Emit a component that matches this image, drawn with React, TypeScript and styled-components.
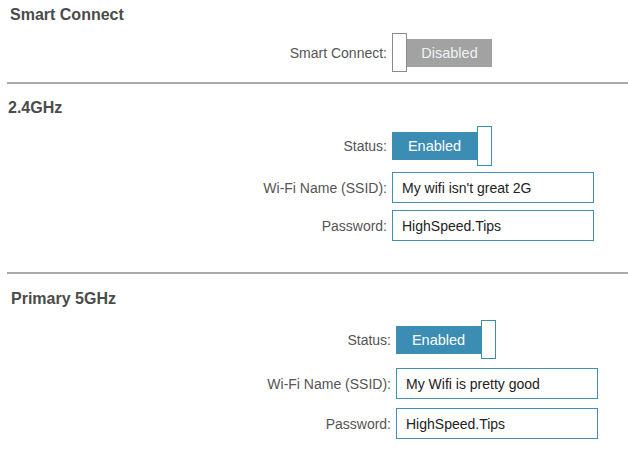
import React from "react";
import styled, { createGlobalStyle } from "styled-components";

const GlobalStyle = createGlobalStyle`
  html, body {
    margin: 0;
    padding: 0;
    background: #ffffff;
  }
  body {
    font-family: "Liberation Sans", Arial, sans-serif;
    color: #555555;
  }
`;

const Page = styled.div`
  width: 628px;
  height: 456px;
  overflow: hidden;
  display: flex;
  flex-direction: column;
`;

const Heading = styled.h2<{ $indent: number; $top: number }>`
  margin: ${(p) => p.$top}px 0 0 0;
  padding-left: ${(p) => p.$indent}px;
  font-size: 16px;
  line-height: 18px;
  font-weight: bold;
  color: #4b4b4b;
`;

const Fields = styled.div<{ $labelWidth: number; $top: number; $gaps: string }>`
  display: grid;
  grid-template-columns: ${(p) => p.$labelWidth}px auto;
  grid-template-rows: ${(p) => p.$gaps};
  column-gap: 5px;
  margin-top: ${(p) => p.$top}px;
  align-items: center;
`;

const Label = styled.div`
  text-align: right;
  font-size: 14px;
  color: #555555;
`;

const ToggleWrap = styled.div`
  display: flex;
  align-items: center;
  height: 100%;
`;

const Bar = styled.div<{ $on: boolean }>`
  width: 85px;
  height: 28px;
  display: flex;
  align-items: center;
  justify-content: center;
  background: ${(p) => (p.$on ? "#3c8db4" : "#a2a2a2")};
  color: ${(p) => (p.$on ? "#ffffff" : "#eef2f5")};
  font-size: 14.5px;
`;

const Knob = styled.div<{ $on: boolean }>`
  box-sizing: border-box;
  width: 15px;
  height: 100%;
  background: #ffffff;
  border: 1px solid ${(p) => (p.$on ? "#3c8db4" : "#8c8c8c")};
`;

const TextInput = styled.input`
  box-sizing: border-box;
  width: 202px;
  height: 31px;
  margin: 0;
  padding: 0 0 0 9px;
  border: 1.5px solid #3f8fb6;
  border-radius: 0;
  outline: none;
  font-family: "Liberation Sans", Arial, sans-serif;
  font-size: 14px;
  color: #222222;
  background: #ffffff;
`;

const Divider = styled.hr<{ $top: number }>`
  box-sizing: border-box;
  margin: ${(p) => p.$top}px 0 0 7px;
  height: 2px;
  border: none;
  background: #a9a9a9;
`;

function Toggle({ on }: { on: boolean }) {
  return (
    <ToggleWrap>
      {!on && <Knob $on={on} />}
      <Bar $on={on}>{on ? "Enabled" : "Disabled"}</Bar>
      {on && <Knob $on={on} />}
    </ToggleWrap>
  );
}

export default function App() {
  return (
    <Page>
      <GlobalStyle />
      <Heading $indent={10} $top={6}>
        Smart Connect
      </Heading>
      <Fields $labelWidth={387} $top={9} $gaps="39px">
        <Label>Smart Connect:</Label>
        <Toggle on={false} />
      </Fields>
      <Divider $top={10} />

      <Heading $indent={8} $top={15}>
        2.4GHz
      </Heading>
      <Fields $labelWidth={387} $top={9} $gaps="40px 6px 31px 7px 31px">
        <Label>Status:</Label>
        <Toggle on />
        <span />
        <span />
        <Label>Wi-Fi Name (SSID):</Label>
        <TextInput defaultValue="My wifi isn't great 2G" />
        <span />
        <span />
        <Label>Password:</Label>
        <TextInput defaultValue="HighSpeed.Tips" />
      </Fields>
      <Divider $top={31} />

      <Heading $indent={11} $top={16}>
        Primary 5GHz
      </Heading>
      <Fields $labelWidth={391} $top={12} $gaps="39px 9px 31px 9px 31px">
        <Label>Status:</Label>
        <Toggle on />
        <span />
        <span />
        <Label>Wi-Fi Name (SSID):</Label>
        <TextInput defaultValue="My Wifi is pretty good" />
        <span />
        <span />
        <Label>Password:</Label>
        <TextInput defaultValue="HighSpeed.Tips" />
      </Fields>
    </Page>
  );
}
